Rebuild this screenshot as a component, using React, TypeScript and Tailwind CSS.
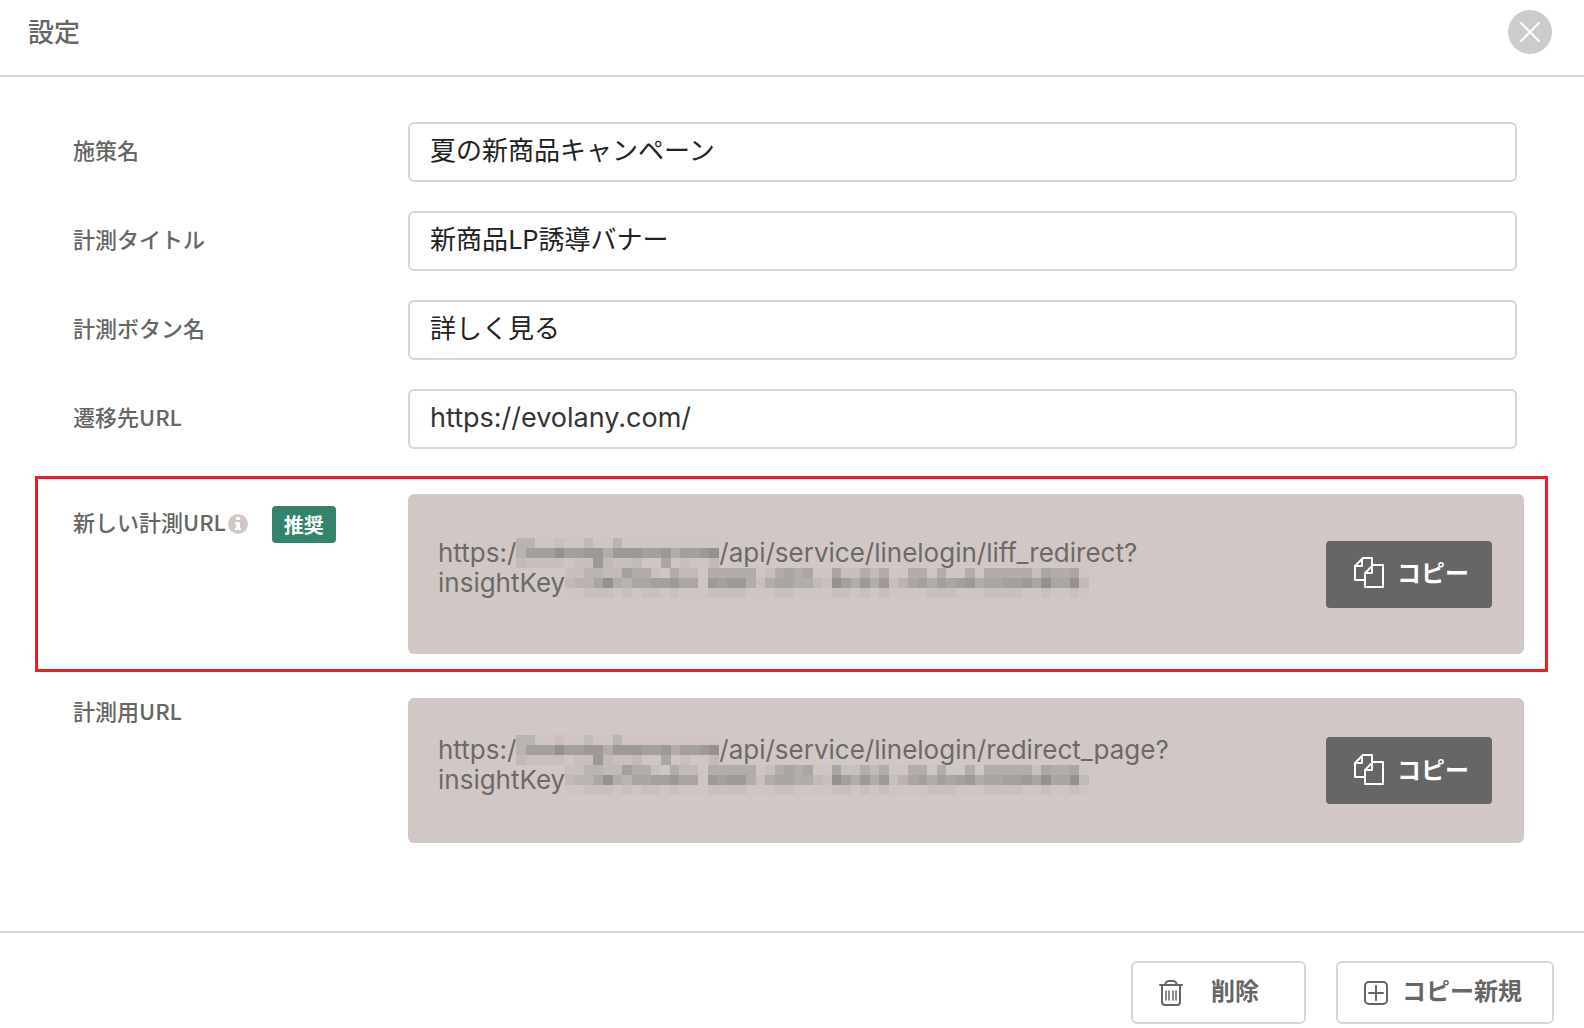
import { useState } from "react";

const FIELDS = [
    { id: "campaign", label: "施策名", value: "夏の新商品キャンペーン", font: "pb-2 text-[26px] text-[#222]" },
    { id: "title", label: "計測タイトル", value: "新商品LP誘導バナー", font: "pb-2 text-[26px] text-[#222]" },
    { id: "button", label: "計測ボタン名", value: "詳しく見る", font: "pb-2 text-[26px] text-[#222]" },
    { id: "dest", label: "遷移先URL", value: "https://evolany.com/", font: "pb-1 font-[Inter,sans-serif] text-[27px] text-[#333]" },
];

// Masked parts of the URLs: one digit per block, 0 is the lightest
const HOST_MASK = [
    "330010020030000000000",
    "366686677477766746678",
    "211110117211200501002",
];
const KEY_MASK = [
    "1133226441042204444401454500511424004404004044444154450",
    "2335843556675507677414554421864747135646567455667585582",
    "0011101011010001111000110000110101000011100011110010010",
];

const SHADES = ["#cfc6c3", "#c9c0bd", "#c1bab7", "#b9b4b1", "#b2adaa", "#aaa6a3", "#a4a09d", "#9d9996", "#94918e"];

function Mosaic({ rows, className }: { rows: string[]; className: string }) {
    const cols = rows[0].length;
    return (
        <svg
            className={className}
            viewBox={`0 0 ${cols} ${rows.length}`}
            preserveAspectRatio="none"
            shapeRendering="crispEdges"
            aria-hidden="true"
        >
            {rows.map((row, y) =>
                row.split("").map((level, x) => (
                    <rect key={`${x}-${y}`} x={x} y={y} width="1" height="1" fill={SHADES[Number(level)]} />
                ))
            )}
        </svg>
    );
}

function CopyIcon() {
    return (
        <svg className="h-8 w-8" viewBox="0 0 32 32" fill="none" stroke="currentColor" strokeWidth="2" strokeLinejoin="round" aria-hidden="true">
            <path d="M12 24H2V10L10 2H19V9" />
            <path d="M2 10H9V3" />
            <path d="M12 17L20 9H30V31H12Z" />
            <path d="M12 17H19V10" />
        </svg>
    );
}

function TrashIcon() {
    return (
        <svg className="h-7 w-6" viewBox="0 0 24 28" fill="none" stroke="currentColor" strokeWidth="2" strokeLinecap="round" aria-hidden="true">
            <path d="M1 6H23" />
            <path d="M6 6Q7 2 10 2H14Q17 2 18 6" />
            <path d="M3 6V23Q3 26 6 26H18Q21 26 21 23V6" />
            <path d="M7 12V21M10 12V21M14 12V21M17 12V21" strokeWidth="1.500" />
        </svg>
    );
}

function PlusIcon() {
    return (
        <svg className="h-6 w-6" viewBox="0 0 24 24" fill="none" stroke="currentColor" strokeWidth="2" strokeLinecap="round" aria-hidden="true">
            <rect x="1" y="1" width="22" height="22" rx="4" />
            <path d="M12 5V19M5 12H19" />
        </svg>
    );
}

function InfoIcon() {
    return (
        <svg className="h-5 w-5 text-[#d1c8c5]" viewBox="0 0 20 20" fill="currentColor" aria-hidden="true">
            <circle cx="10" cy="10" r="10" />
            <path fill="#fff" d="M8 3h4v3H8zM7 8h5v6h1v2H7v-2h1v-4H7z" />
        </svg>
    );
}

function UrlPanel({ path, className }: { path: string; className: string }) {
    return (
        <div className={`flex min-w-0 flex-1 items-center justify-between rounded-md bg-[#d1c8c5] pr-8 pl-[30px] ${className}`}>
            <div className="pb-3 font-[Inter,sans-serif] text-[26px] leading-[30px] text-[#6b6a69]">
                <div className="flex h-[30px] items-center">
                    <span>https:/</span>
                    <Mosaic rows={HOST_MASK} className="h-[30px] w-[203px]" />
                    <span>{path}</span>
                </div>
                <div className="flex h-[30px] items-center">
                    <span>insightKey</span>
                    <Mosaic rows={KEY_MASK} className="h-[30px] w-[524px]" />
                </div>
            </div>
            <button type="button" className="flex h-[67px] w-[166px] shrink-0 items-center justify-center gap-3 rounded bg-[#666] pb-1 pl-1 text-2xl font-bold text-white">
                <CopyIcon />
                コピー
            </button>
        </div>
    );
}

export default function App() {
    const [values, setValues] = useState(FIELDS.map((f) => f.value));

    return (
        <div className="bg-white font-['Noto_Sans_CJK_JP',sans-serif] text-[#666]">
            <header className="flex h-[77px] items-start justify-between border-b-2 border-[#dbd5d1] pt-[10px] pr-8 pl-7">
                <h1 className="text-[26px] leading-[42px] font-medium">設定</h1>
                <button type="button" aria-label="閉じる" className="flex size-11 items-center justify-center rounded-full bg-[#ccc] text-white">
                    <svg className="size-6" viewBox="0 0 24 24" stroke="currentColor" strokeWidth="2" strokeLinecap="round" aria-hidden="true">
                        <path d="M3 3L21 21M21 3L3 21" />
                    </svg>
                </button>
            </header>

            <main className="pt-[45px]">
                <div className="flex flex-col gap-[29px] pr-[67px] pl-[73px]">
                    {FIELDS.map((field, i) => (
                        <div key={field.id} className="flex items-center">
                            <label htmlFor={field.id} className="w-[335px] shrink-0 pb-1.5 text-[22px] font-medium">
                                {field.label}
                            </label>
                            <input
                                id={field.id}
                                value={values[i]}
                                onChange={(e) => setValues(values.map((v, j) => (j === i ? e.target.value : v)))}
                                className={`h-[60px] min-w-0 flex-1 rounded-md border-2 border-[#dbd5d1] px-5 ${field.font}`}
                            />
                        </div>
                    ))}
                </div>

                {/* Recommended URL */}
                <section className="mt-[27px] mr-9 ml-[35px] flex border-3 border-[#ee1c25] py-[15px] pr-[21px] pl-[35px]">
                    <div className="flex w-[335px] shrink-0 items-start pt-3">
                        <h2 className="text-[22px] leading-[30px] font-medium">新しい計測URL</h2>
                        <span className="mt-2 ml-0.5">
                            <InfoIcon />
                        </span>
                        <span className="ml-6 rounded-sm bg-[#34836c] px-3 text-xl leading-[37px] font-bold text-white">推奨</span>
                    </div>
                    <UrlPanel path="/api/service/linelogin/liff_redirect?" className="h-40" />
                </section>

                <section className="mt-[26px] mr-[60px] ml-[73px] flex">
                    <h2 className="w-[335px] shrink-0 text-[22px] leading-6 font-medium">計測用URL</h2>
                    <UrlPanel path="/api/service/linelogin/redirect_page?" className="h-[145px]" />
                </section>
            </main>

            <footer className="mt-[88px] flex justify-end gap-[30px] border-t-2 border-[#dbd5d1] pt-7 pr-[30px] pb-1">
                <button type="button" className="flex h-[63px] w-[175px] items-center gap-7 rounded-md border-2 border-[#dbd5d1] pl-[26px] text-2xl font-bold">
                    <TrashIcon />
                    <span className="pb-1.5">削除</span>
                </button>
                <button type="button" className="flex h-[63px] w-[218px] items-center gap-[14px] rounded-md border-2 border-[#dbd5d1] pl-[26px] text-2xl font-bold whitespace-nowrap">
                    <PlusIcon />
                    <span className="pb-1.5">コピー新規</span>
                </button>
            </footer>
        </div>
    );
}
